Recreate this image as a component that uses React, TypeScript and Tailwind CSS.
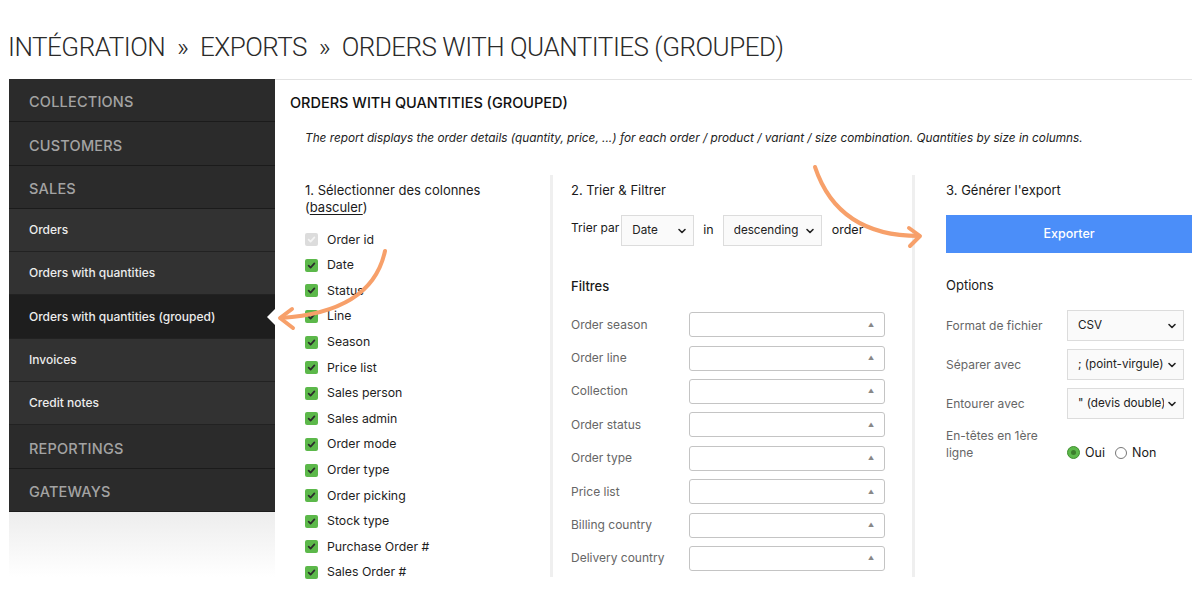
import React from "react";
import { ChevronDown } from "lucide-react";

const cols = [
  "Order id",
  "Date",
  "Status",
  "Line",
  "Season",
  "Price list",
  "Sales person",
  "Sales admin",
  "Order mode",
  "Order type",
  "Order picking",
  "Stock type",
  "Purchase Order #",
  "Sales Order #",
];

const filters = [
  "Order season",
  "Order line",
  "Collection",
  "Order status",
  "Order type",
  "Price list",
  "Billing country",
  "Delivery country",
];

function Check({ disabled }: { disabled?: boolean }) {
  return (
    <span
      className={
        "flex h-[13px] w-[13px] shrink-0 items-center justify-center rounded-[2px] " +
        (disabled ? "bg-[#dcdcdc]" : "bg-[#5cb84a]")
      }
    >
      <svg width="9" height="9" viewBox="0 0 10 10">
        <path
          d="M1.8 5.2 L4 7.3 L8.2 2.6"
          fill="none"
          stroke={disabled ? "#f4f4f4" : "#2b2b2b"}
          strokeWidth="1.9"
          strokeLinecap="round"
          strokeLinejoin="round"
        />
      </svg>
    </span>
  );
}

function Select({ w, value }: { w: string; value: string }) {
  return (
    <div
      className={
        "flex h-[31px] items-center justify-between border border-[#dcdcdc] bg-[#fafafa] pl-[10px] pr-[5px] text-[11.7px] text-[#222] " +
        w
      }
    >
      <span className="overflow-hidden whitespace-nowrap">{value}</span>
      <ChevronDown size={12} strokeWidth={3.2} className="ml-[2px] shrink-0 text-[#222]" />
    </div>
  );
}

function SideHeader({ label }: { label: string }) {
  return (
    <div className="flex h-[43.3px] items-center border-b border-[#1b1b1b] bg-[#2b2b2b] pl-[20px] pt-[4px] text-[14.5px] font-medium tracking-[0.2px] text-[#a3a3a3]">
      {label}
    </div>
  );
}

function SideItem({ label, active }: { label: string; active?: boolean }) {
  return (
    <div
      className={
        "relative flex h-[43.3px] items-center border-b border-[#222] pl-[20px] text-[12px] font-medium text-[#ececec] " +
        (active ? "bg-[#1e1e1e]" : "bg-[#323232]")
      }
    >
      {label}
      {active && (
        <span className="absolute right-0 top-1/2 h-0 w-0 -translate-y-1/2 border-y-[8px] border-r-[8px] border-y-transparent border-r-white" />
      )}
    </div>
  );
}

export default function App() {
  return (
    <div
      className="relative h-[600px] w-[1200px] overflow-hidden bg-white text-[#1a1a1a]"
      style={{ fontFamily: "Inter, 'Noto Sans', sans-serif" }}
    >
      <div
        className="flex h-[79px] items-center pl-[8px] pt-[16px] text-[26px] font-light tracking-[-0.5px] text-[#2a2a2a]"
        style={{ fontFamily: "Roboto, 'Liberation Sans', sans-serif" }}
      >
        INTÉGRATION&nbsp;&nbsp;»&nbsp;&nbsp;EXPORTS&nbsp;&nbsp;»&nbsp;&nbsp;ORDERS WITH QUANTITIES (GROUPED)
      </div>
      <div className="ml-[9px] mr-[8px] flex h-[498px] border-t border-[#e2e2e2]">
        {/* Sidebar */}
        <div className="-mt-px flex w-[266px] shrink-0 flex-col">
          <SideHeader label="COLLECTIONS" />
          <SideHeader label="CUSTOMERS" />
          <SideHeader label="SALES" />
          <SideItem label="Orders" />
          <SideItem label="Orders with quantities" />
          <SideItem label="Orders with quantities (grouped)" active />
          <SideItem label="Invoices" />
          <SideItem label="Credit notes" />
          <SideHeader label="REPORTINGS" />
          <SideHeader label="GATEWAYS" />
          <div className="flex-1 bg-gradient-to-b from-[#ededed] to-white" />
        </div>

        {/* Main */}
        <div className="flex min-w-0 flex-1 flex-col pl-[15px]">
          <div className="mt-[14px] text-[14.5px] font-medium leading-[17px] text-[#111]">
            ORDERS WITH QUANTITIES (GROUPED)
          </div>
          <div className="mt-[19px] pl-[15px] text-[11.8px] italic leading-[16px] text-[#222]">
            The report displays the order details (quantity, price, ...) for each order / product / variant / size
            combination. Quantities by size in columns.
          </div>

          <div className="mt-[29px] flex min-h-0 flex-1">
            {/* Column 1 */}
            <div className="w-[260px] shrink-0 pl-[15px] pt-[7px]">
              <div className="text-[13px] leading-[17px] text-[#1a1a1a]">
                1. Sélectionner des colonnes
                <br />(<span className="underline underline-offset-2">basculer</span>)
              </div>
              <div className="mt-[11px] flex flex-col">
                {cols.map((c, i) => (
                  <div key={c} className="flex h-[25.6px] shrink-0 items-center gap-[9px] text-[12.3px] text-[#1e1e1e]">
                    <Check disabled={i === 0} />
                    <span>{c}</span>
                  </div>
                ))}
              </div>
            </div>
            <div className="w-[3px] shrink-0 bg-[#efefef]" />

            {/* Column 2 */}
            <div className="w-[359px] shrink-0 pl-[18px] pt-[7px]">
              <div className="text-[13px] leading-[17px]">2. Trier &amp; Filtrer</div>
              <div className="mt-[16px] flex items-center text-[12.5px]">
                <span className="-mt-[5px] mr-[2px] text-[12px]">Trier par</span>
                <Select w="w-[73px]" value="Date" />
                <span className="mx-[9px]">in</span>
                <Select w="w-[99px]" value="descending" />
                <span className="ml-[10px]">order</span>
              </div>
              <div className="mt-[32px] text-[13px] font-medium leading-[17px]">Filtres</div>
              <div className="mt-[13px] flex flex-col">
                {filters.map((f) => (
                  <div key={f} className="flex h-[33.4px] items-center">
                    <span className="w-[118px] text-[12px] text-[#666]">{f}</span>
                    <div className="flex h-[25px] w-[196px] items-center justify-end rounded-[3px] border border-[#c4c4c4] bg-white pr-[10px]">
                      <span className="text-[6px] leading-none text-[#888]">▲</span>
                    </div>
                  </div>
                ))}
              </div>
            </div>
            <div className="w-[3px] shrink-0 bg-[#efefef]" />

            {/* Column 3 */}
            <div className="min-w-0 flex-1 pl-[31px] pt-[7px]">
              <div className="text-[13px] leading-[17px]">3. Générer l'export</div>
              <div className="mt-[16px] flex h-[38px] items-center justify-center bg-[#4b8ef9] text-[12.5px] font-medium text-white">
                Exporter
              </div>
              <div className="mt-[24px] text-[13px] leading-[17px]">Options</div>
              <div className="mt-[16px] flex flex-col gap-[8px]">
                {[
                  ["Format de fichier", "CSV"],
                  ["Séparer avec", "; (point-virgule)"],
                  ["Entourer avec", '" (devis double)'],
                ].map(([l, v]) => (
                  <div key={l} className="flex items-center">
                    <span className="w-[121px] text-[12px] text-[#666]">{l}</span>
                    <Select w="w-[117px]" value={v} />
                  </div>
                ))}
                <div className="flex items-end">
                  <span className="w-[121px] pr-[20px] text-[12px] leading-[17px] text-[#666]">
                    En-têtes en 1ère ligne
                  </span>
                  <div className="flex items-center text-[12.5px] leading-[17px]">
                    <span className="flex h-[13px] w-[13px] items-center justify-center rounded-full border border-[#3f8f2f] bg-[#5cb84a]">
                      <span className="h-[5px] w-[5px] rounded-full bg-[#3c7d2c]" />
                    </span>
                    <span className="ml-[5px]">Oui</span>
                    <span className="ml-[10px] h-[12px] w-[12px] rounded-full border border-[#777] bg-white" />
                    <span className="ml-[5px]">Non</span>
                  </div>
                </div>
              </div>
            </div>
          </div>
        </div>
      </div>

      {/* Orange annotation arrows */}
      <svg
        className="pointer-events-none absolute left-0 top-0"
        width="1200"
        height="600"
        viewBox="0 0 1200 600"
      >
        <g fill="none" stroke="#f7a06a" strokeWidth="4" strokeLinecap="round" strokeLinejoin="round">
          <path d="M385 251 Q 372 312 281 318" />
          <path d="M292 309 L280 318 L293 328" />
          <path d="M815 167 Q 838 236 919 236" />
          <path d="M909 228 L920 236 L910 246" />
        </g>
      </svg>
    </div>
  );
}
